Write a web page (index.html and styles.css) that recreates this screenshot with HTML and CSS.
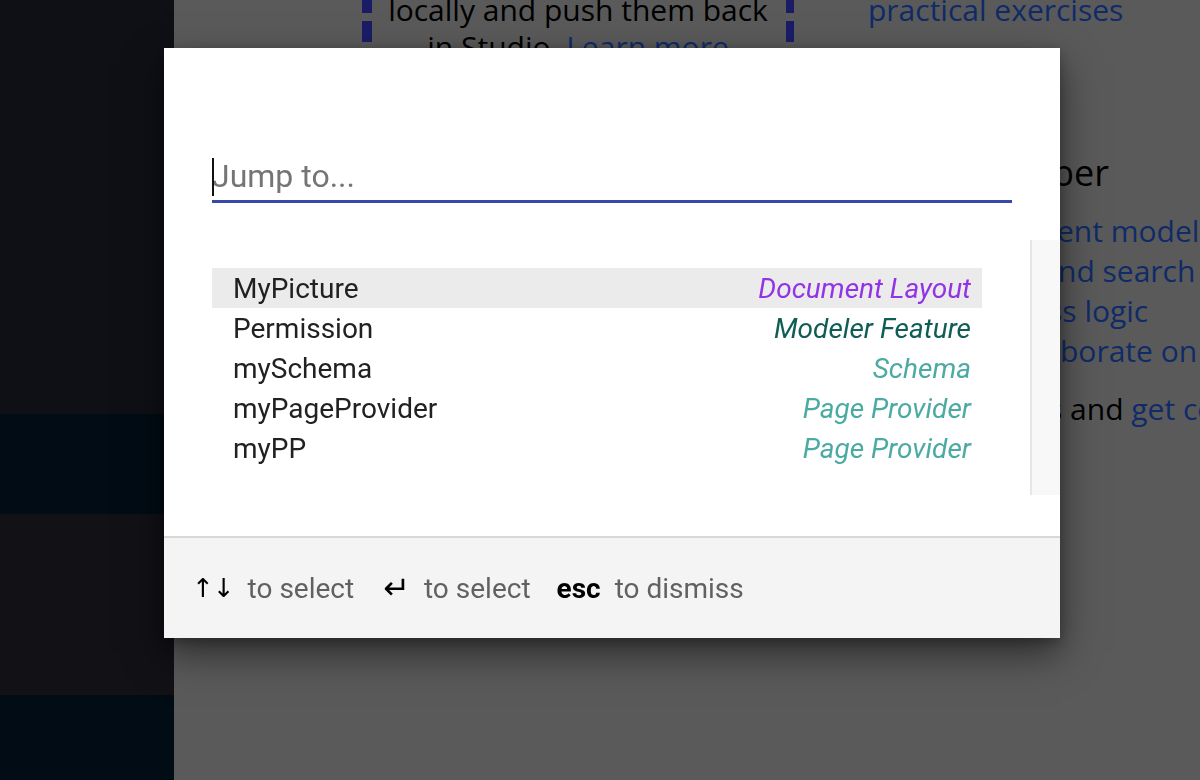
FILE: index.html
```html
<!DOCTYPE html>
<html lang="en">
<head>
<meta charset="utf-8">
<title>Jump to</title>
<link rel="stylesheet" href="styles.css">
</head>
<body>
<div class="app">
  <aside class="sidebar">
    <div class="nav-block nav-top"></div>
    <div class="nav-block nav-active"></div>
    <div class="nav-block nav-mid"></div>
    <div class="nav-block nav-active nav-last"></div>
  </aside>
  <main class="page">
    <div class="hero">
      <div class="callout">locally and push them back<br>in Studio. <a class="link">Learn more</a></div>
      <div class="hero-side"><a class="link">practical exercises</a></div>
    </div>
    <section class="topics">
      <h2 class="topics-title"><span class="pre pre-h">Remem</span>ber</h2>
      <ul class="topics-list">
        <li><a class="link"><span class="pre pre-1">Docum</span>ent model</a></li>
        <li><a class="link"><span class="pre pre-2">Query a</span>nd search</a></li>
        <li><a class="link"><span class="pre pre-3">Busine</span>ss logic</a></li>
        <li><a class="link"><span class="pre pre-4">Colla</span>borate on</a></li>
      </ul>
      <p class="topics-more"><span class="pre pre-5">exercise</span>s and <a class="link">get coding</a></p>
    </section>
  </main>
</div>

<div class="backdrop">
  <div class="dialog" role="dialog" aria-label="Jump to">
    <div class="dialog-head">
      <div class="search">
        <span class="caret"></span>
        <input class="search-input" type="text" placeholder="Jump to...">
      </div>
    </div>
    <div class="dialog-body">
      <ul class="results">
        <li class="result selected"><span class="result-name">MyPicture</span><span class="result-type t-layout">Document Layout</span></li>
        <li class="result"><span class="result-name">Permission</span><span class="result-type t-feature">Modeler Feature</span></li>
        <li class="result"><span class="result-name">mySchema</span><span class="result-type t-light">Schema</span></li>
        <li class="result"><span class="result-name">myPageProvider</span><span class="result-type t-light">Page Provider</span></li>
        <li class="result"><span class="result-name">myPP</span><span class="result-type t-light">Page Provider</span></li>
      </ul>
      <div class="scroll-track"></div>
    </div>
    <div class="dialog-foot">
      <span class="key key-arrows">↑↓</span><span class="hint">to select</span>
      <span class="key key-enter">↵</span><span class="hint">to select</span>
      <span class="key key-esc">esc</span><span class="hint">to dismiss</span>
    </div>
  </div>
</div>
</body>
</html>
```

FILE: styles.css
```css
* { box-sizing: border-box; }
html, body { margin: 0; padding: 0; }
body {
  width: 1200px;
  height: 780px;
  overflow: hidden;
  background: #5a5a5a;
  font-family: "Open Sans", "Liberation Sans", sans-serif;
}

.app {
  display: flex;
  height: 780px;
}

/* sidebar */
.sidebar {
  width: 174px;
  flex: none;
  display: flex;
  flex-direction: column;
  background: #0f1016;
}
.nav-block { flex: none; }
.nav-top { height: 414px; }
.nav-active { height: 100px; background: #010c14; }
.nav-mid { height: 181px; background: #111116; }
.nav-last { height: 85px; }

/* page */
.page {
  flex: 1;
  min-width: 0;
  padding-left: 188px;
  color: #000;
  font-size: 30px;
}
.link { color: #0f2b68; text-decoration: none; }

.hero {
  display: flex;
  align-items: flex-start;
  margin-top: -17px;
}
.callout {
  width: 432px;
  padding: 8px 18px;
  line-height: 37px;
  text-align: center;
  white-space: nowrap;
  background:
    repeating-linear-gradient(to bottom, #1a1d66 0 21px, transparent 21px 29px) left -20px / 10px 100% no-repeat,
    repeating-linear-gradient(to bottom, #1a1d66 0 21px, transparent 21px 29px) right -20px / 8px 100% no-repeat;
}
.hero-side {
  margin-left: 74px;
  padding-top: 8px;
  line-height: 37px;
  white-space: nowrap;
}

.topics {
  margin-left: 606px;
  margin-top: 76px;
  white-space: nowrap;
}
.topics-title {
  margin: 0;
  font-size: 36px;
  font-weight: 400;
  line-height: 48px;
}
.topics-list {
  list-style: none;
  margin: 14px 0 0;
  padding: 0;
  line-height: 40px;
}
.topics-more {
  margin: 18px 0 0;
  line-height: 40px;
}
.pre {
  display: inline-block;
  vertical-align: top;
  overflow: hidden;
  direction: rtl;
  text-align: right;
}
.pre-h { width: 84px; }
.pre-1 { width: 89px; }
.pre-2 { width: 90px; }
.pre-3 { width: 80px; }
.pre-4 { width: 92px; }
.pre-5 { width: 80px; }

/* modal */
.backdrop {
  position: fixed;
  inset: 0;
}
.dialog {
  position: absolute;
  left: 164px;
  top: 48px;
  width: 896px;
  height: 590px;
  background: #fff;
  display: flex;
  flex-direction: column;
  font-family: Roboto, "Liberation Sans", sans-serif;
  box-shadow: 0 16px 36px rgba(0, 0, 0, 0.5), 0 4px 12px rgba(0, 0, 0, 0.25);
}

.dialog-head {
  padding: 108px 48px 37px;
}
.search {
  position: relative;
  border-bottom: 3px solid #3949ab;
}
.search-input {
  display: block;
  width: 100%;
  height: 44px;
  border: 0;
  outline: 0;
  padding: 0 0 4px;
  margin: 0;
  background: transparent;
  font-family: Roboto, "Liberation Sans", sans-serif;
  font-size: 32px;
  color: #212121;
}
.search-input::placeholder { color: #757575; opacity: 1; }
.caret {
  position: absolute;
  left: 0;
  top: 2px;
  width: 2px;
  height: 38px;
  background: #111;
}

.dialog-body {
  display: flex;
  height: 255px;
}
.results {
  list-style: none;
  margin: 0;
  padding: 28px 48px 0;
  flex: 1;
}
.result {
  display: flex;
  justify-content: space-between;
  align-items: center;
  height: 40px;
  padding: 0 11px 0 21px;
  font-size: 28px;
  color: #212121;
}
.result.selected { background: #ebebeb; }
.result-type { font-style: italic; }
.t-layout { color: #9333e6; }
.t-feature { color: #0f5e55; }
.t-light { color: #4baaa1; }

.scroll-track {
  width: 30px;
  flex: none;
  background: #f8f8f8;
  border-left: 2px solid #e6e6e6;
}

.dialog-foot {
  margin-top: auto;
  height: 102px;
  border-top: 2px solid #d8d8d8;
  background: #f4f4f4;
  display: flex;
  align-items: center;
  padding: 0 0 0 28px;
  font-size: 28px;
}
.key {
  color: #000;
}
.key-arrows {
  font-family: "DejaVu Sans", sans-serif;
  font-size: 26px;
  letter-spacing: -1px;
  margin-right: 14px;
}
.key-enter {
  font-family: "DejaVu Sans", sans-serif;
  font-size: 32px;
  margin-left: 29px;
  margin-right: 14px;
}
.key-esc { font-weight: 700; margin-left: 26px; margin-right: 14px; }
.hint { color: #616161; }
```
